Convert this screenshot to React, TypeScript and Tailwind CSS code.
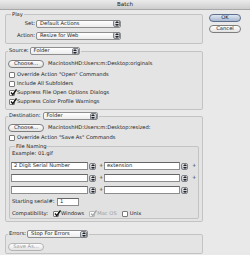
import React from 'react';

const font = { fontFamily: '"DejaVu Sans", "Liberation Sans", sans-serif' };

function Arrows() {
  return (
    <span className="flex h-[7px] w-[7px] shrink-0 items-center justify-center rounded-[2px] border border-[#7c8088] bg-gradient-to-b from-[#e6e8ec] to-[#b6bac2]">
      <svg width="4" height="5" viewBox="0 0 4 5">
        <path d="M2 0 L4 2 L0 2 Z" fill="#222" />
        <path d="M2 5 L4 3 L0 3 Z" fill="#222" />
      </svg>
    </span>
  );
}

function Popup({ value, width }: { value: string; width: string }) {
  return (
    <div
      className={`flex h-[8px] items-center justify-between rounded-[2px] border border-[#8e8e8e] bg-gradient-to-b from-white to-[#ececec] pl-[3px] ${width}`}
    >
      <span className="leading-none">{value}</span>
      <Arrows />
    </div>
  );
}

function Btn({ children, className = '', disabled = false }: { children: React.ReactNode; className?: string; disabled?: boolean }) {
  return (
    <div
      className={`flex h-[8px] items-center justify-center rounded-full border leading-none ${
        disabled ? 'border-[#b4b4b4] text-[#9a9a9a]' : 'border-[#7d7d7d]'
      } bg-gradient-to-b from-white to-[#e2e2e2] ${className}`}
    >
      {children}
    </div>
  );
}

function Check({ label, checked = false, disabled = false }: { label: string; checked?: boolean; disabled?: boolean }) {
  return (
    <div className="flex h-[9px] items-center gap-[2px]">
      <span
        className={`relative h-[6px] w-[6px] shrink-0 rounded-[1px] border bg-white ${
          disabled ? 'border-[#b8b8b8]' : 'border-[#7a7a7a]'
        }`}
      >
        {checked && (
          <svg className="absolute -top-[2px] left-0" width="7" height="7" viewBox="0 0 7 7">
            <path d="M1 3.5 L2.8 5.6 L6.5 0.5" fill="none" stroke={disabled ? '#a8a8a8' : '#111'} strokeWidth="1.4" />
          </svg>
        )}
      </span>
      <span className={`leading-none ${disabled ? 'text-[#9c9c9c]' : ''}`}>{label}</span>
    </div>
  );
}

function Field({ value = '', width }: { value?: string; width: string }) {
  return (
    <div className={`flex h-[8px] items-center border border-[#8c8c8c] border-t-[#666] bg-white pl-[2px] leading-none ${width}`}>
      {value}
    </div>
  );
}

const namingRows: [string, string, boolean][] = [
  ['2 Digit Serial Number', 'extension', true],
  ['', '', true],
  ['', '', false],
];

export default function App() {
  return (
    <div className="h-[255px] w-[250px] overflow-hidden bg-[#e9e9e9] text-[5.2px] text-[#1c1c1c]" style={font}>
      <div className="flex h-[10px] items-center justify-center border-b border-[#a8a8a8] bg-gradient-to-b from-[#ebebeb] to-[#cdcdcd] text-[5.6px] text-[#222]">
        Batch
      </div>

      <div className="flex pl-[5px]">
        <div className="w-[198px]">
          {/* Play */}
          <fieldset className="mt-[1px] rounded-[2px] border border-[#c3c3c3] bg-[#e4e4e4] px-[3px] pb-[3px]">
            <legend className="ml-[2px] h-[6px] px-[1px] leading-[6px]">Play</legend>
            <div className="mt-[2px] flex h-[9px] items-center">
              <span className="w-[27px] pr-[1px] text-right leading-none">Set:</span>
              <Popup value="Default Actions" width="w-[85px]" />
            </div>
            <div className="mt-[3px] flex h-[9px] items-center">
              <span className="w-[27px] pr-[1px] text-right leading-none">Action:</span>
              <Popup value="Resize for Web" width="w-[85px]" />
            </div>
          </fieldset>

          {/* Source */}
          <fieldset className="mt-[3px] rounded-[2px] border border-[#c3c3c3] bg-[#e4e4e4] px-[2px] pb-[3px]">
            <legend className="flex h-[8px] items-center gap-[1px] px-[1px]">
              <span className="leading-none">Source:</span>
              <Popup value="Folder" width="w-[50px]" />
            </legend>
            <div className="mt-[5px] flex h-[8px] items-center gap-[4px]">
              <Btn className="w-[36px]">Choose...</Btn>
              <span className="leading-none">MacintoshHD:Users:m:Desktop:originals</span>
            </div>
            <div className="ml-[1px] mt-[2px]">
              <Check label={'Override Action "Open" Commands'} />
              <Check label="Include All Subfolders" />
              <Check label="Suppress File Open Options Dialogs" checked />
              <Check label="Suppress Color Profile Warnings" checked />
            </div>
          </fieldset>

          {/* Destination */}
          <fieldset className="mt-[2px] rounded-[2px] border border-[#c3c3c3] bg-[#e4e4e4] px-[2px] pb-[2px]">
            <legend className="flex h-[8px] items-center gap-[2px] px-[1px]">
              <span className="leading-none">Destination:</span>
              <Popup value="Folder" width="w-[55px]" />
            </legend>
            <div className="mt-[4px] flex h-[8px] items-center gap-[4px]">
              <Btn className="w-[36px]">Choose...</Btn>
              <span className="leading-none">MacintoshHD:Users:m:Desktop:resized:</span>
            </div>
            <div className="ml-[1px] mt-[2px] flex h-[8px] items-center">
              <Check label={'Override Action "Save As" Commands'} />
            </div>

            <fieldset className="mx-[1px] mt-[1px] rounded-[2px] border border-[#c3c3c3] bg-[#e1e1e1] px-[1px]">
              <legend className="ml-[4px] h-[6px] px-[1px] leading-[6px]">File Naming</legend>
              <div className="ml-[1px] mt-[2px] flex h-[6px] items-center leading-none">Example: 01.gif</div>

              {namingRows.map(([a, b, plus], i) => (
                <div key={i} className={`${i === 0 ? 'mt-[5px]' : 'mt-[4px]'} flex h-[8px] items-center`}>
                  <Field value={a} width="w-[77px]" />
                  <span className="ml-[1px]"><Arrows /></span>
                  <span className="ml-[3px] w-[3px] leading-none">+</span>
                  <span className="ml-[2px]"><Field value={b} width="w-[76px]" /></span>
                  <span className="ml-[1px]"><Arrows /></span>
                  {plus && <span className="ml-[4px] leading-none">+</span>}
                </div>
              ))}

              <div className="mt-[4px] flex h-[8px] items-center">
                <span className="ml-[1px] w-[45px] leading-none">Starting serial#:</span>
                <Field value="1" width="w-[22px]" />
              </div>
              <div className="mt-[4px] flex h-[8px] items-center">
                <span className="ml-[1px] w-[41px] leading-none">Compatibility:</span>
                <div className="flex gap-[5px]">
                  <Check label="Windows" checked />
                  <Check label="Mac OS" checked disabled />
                  <Check label="Unix" />
                </div>
              </div>
            </fieldset>
          </fieldset>

          {/* Errors */}
          <fieldset className="mt-[8px] rounded-[2px] border border-[#c3c3c3] bg-[#e4e4e4] px-[2px] pb-[2px]">
            <legend className="flex h-[8px] items-center gap-[1px] px-[1px]">
              <span className="leading-none">Errors:</span>
              <Popup value="Stop For Errors" width="w-[61px]" />
            </legend>
            <div className="mt-[5px] flex h-[8px] items-center">
              <Btn className="w-[36px]" disabled>Save As...</Btn>
            </div>
          </fieldset>
        </div>

        <div className="ml-[6px] w-[32px] pt-[4px]">
          <div className="flex h-[8px] items-center justify-center rounded-full border border-[#5d6f8c] bg-gradient-to-b from-[#dfe6f1] to-[#a9b8cf] leading-none">
            OK
          </div>
          <Btn className="mt-[3px] w-[32px]">Cancel</Btn>
        </div>
      </div>
    </div>
  );
}
